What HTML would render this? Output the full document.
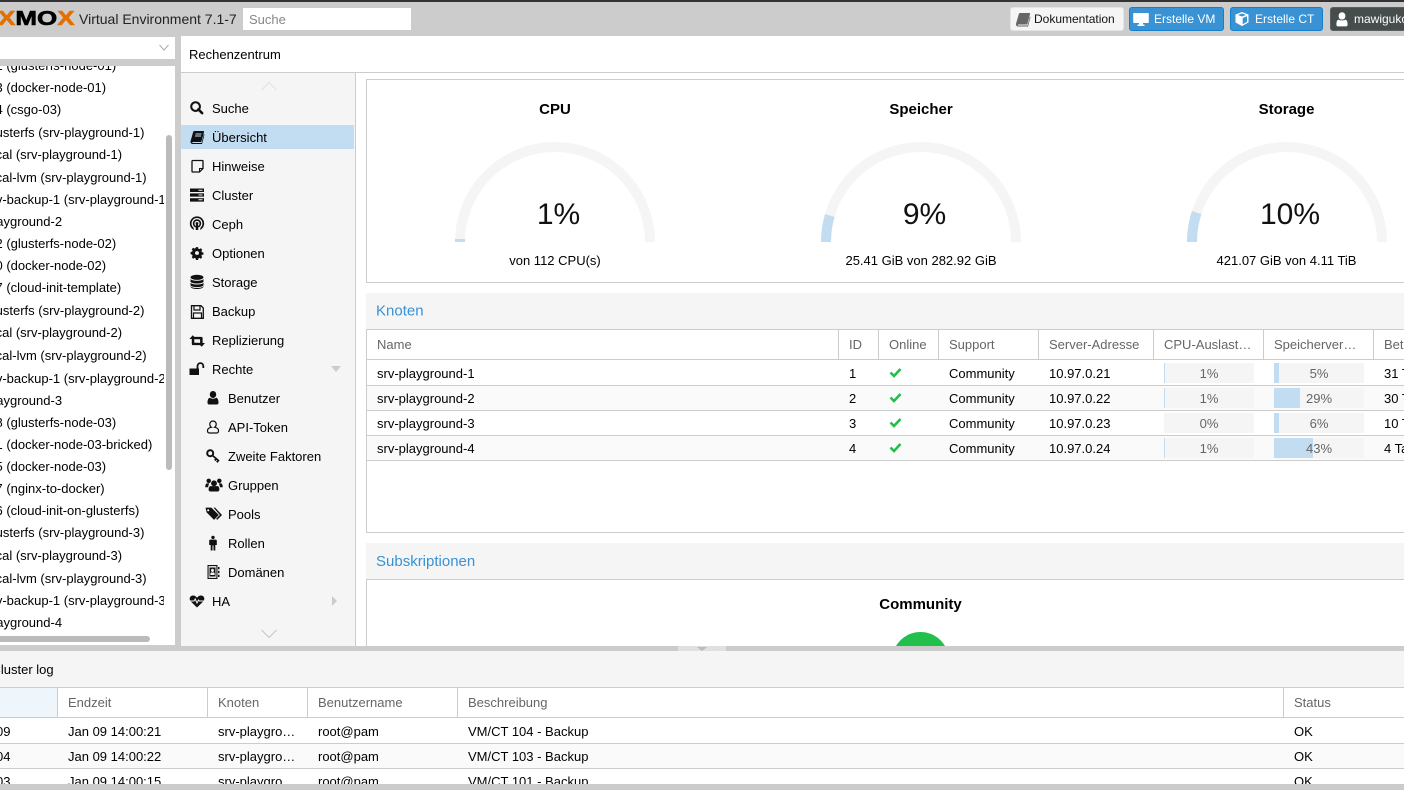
<!DOCTYPE html>
<html lang="de"><head><meta charset="utf-8"><title>Proxmox Virtual Environment</title>
<style>
html,body{margin:0;padding:0;overflow:hidden}
html{height:790px}
body{width:1404px;height:790px;overflow:hidden;position:relative;background:#ccc;font:13px/22px "Liberation Sans",sans-serif;color:#000}
div,svg{position:absolute}
.t{white-space:nowrap}
.b{background:#ccc}
.g{color:#666}
.m{left:212px}
.s{left:228px}
.ic{width:16px;height:16px;left:189px;fill:#111}
.ic.sub{left:205px}
.btn{top:7px;height:22px;border:1px solid #157fcc;border-radius:3px;background:#3892d4;color:#fff;font-size:12px;line-height:22px;box-sizing:content-box}
.c{text-align:center}
.bar{width:90px;height:20px;background:#f5f5f5;color:#666;text-align:center;line-height:22px;overflow:hidden}
.bar i{position:absolute;left:0;top:0;height:20px;background:#c2ddf2}
.bar span{position:relative}
</style></head><body>
<div style="left:0;top:0;width:1404px;height:2px;background:#333"></div>

<!-- logo + top -->
<div class="t" style="left:-2px;top:6px;font:bold 20px/26px 'Liberation Sans',sans-serif;-webkit-text-stroke:.6px currentColor;transform:scaleX(1.3);transform-origin:0 50%"><span style="color:#e57000">X</span><span style="color:#000">MO</span><span style="color:#e57000">X</span></div>
<div class="t" style="left:79px;top:8px;font-size:14px;color:#222">Virtual Environment 7.1-7</div>
<div class="t" style="left:243px;top:8px;height:22px;padding-left:6px;width:162px;background:#fff;color:#888;line-height:23px">Suche</div>

<div class="btn" style="left:1010px;width:112px;background:#f5f5f5;border-color:#e4e4e4;color:#111"><span style="position:absolute;left:23px" class="t">Dokumentation</span>
<svg style="left:4px;top:3px" width="16" height="16" viewBox="0 0 16 16"><path fill="#666" d="M5 2h9.500c.5 0 .7.500.5 1l-2.500 9.500c-.2.800-.7 1-1.300 1H3.500c-1 0-1 1 0 1h9l2.300-9 .7.500-2.400 9.500H3.300c-1.800 0-2.600-1.300-2.200-3L3.700 3.500C4 2.500 4.200 2 5 2z"/></svg></div>
<div class="btn" style="left:1129px;width:93px"><span style="position:absolute;left:24px" class="t">Erstelle VM</span>
<svg style="left:3px;top:3px" width="16" height="16" viewBox="0 0 16 16"><path fill="#fff" d="M1 2h14c.5 0 .8.300.8.800v8.400c0 .5-.3.800-.8.800H10v1.500h1.500V15h-7v-1.500H6V12H1c-.5 0-.8-.3-.8-.8V2.800C.2 2.300.5 2 1 2z"/></svg></div>
<div class="btn" style="left:1230px;width:91px"><span style="position:absolute;left:24px" class="t">Erstelle CT</span>
<svg style="left:3px;top:3px" width="16" height="16" viewBox="0 0 16 16"><path fill="#fff" d="M8 1l6.500 2.500v8L8 15l-6.500-3.500v-8zM8 2.500L4 4l4 1.500L12 4zM8.700 13.200l4.300-2.400V5.300L8.700 7z"/></svg></div>
<div class="btn" style="left:1330px;width:80px;background:#464d4d;border-color:#5a6060"><span style="position:absolute;left:23px" class="t">mawigukotest</span>
<svg style="left:2px;top:2px" width="18" height="18" viewBox="0 0 16 16"><path fill="#fff" d="M8 2a3 3 0 0 1 3 3.200C11 7 10 8.500 8 8.500S5 7 5 5.200A3 3 0 0 1 8 2zM5 8.500C6 9.500 10 9.500 11 8.500c1.500.3 2 2 2 4.500 0 1-.5 1.500-1.500 1.500h-7C3.500 14.500 3 14 3 13c0-2.500.5-4.200 2-4.500z"/></svg></div>

<!-- tree select -->
<div style="left:0;top:37px;width:175px;height:22px;background:#fff"></div>
<svg style="left:158px;top:43px" width="12" height="10" viewBox="0 0 12 10"><path d="M1.500 2l4.500 5 4.500-5" fill="none" stroke="#aaa"/></svg>

<!-- tree -->
<div class="tree" style="left:0;top:66px;width:175px;height:579px;background:#fff;overflow:hidden">
 <div style="left:0;top:1px;width:164px;height:578px;overflow:visible;clip-path:inset(-5px 0 0 0)">
 <div class="t" style="left:-4.500px;top:-12px">1 (glusterfs-node-01)</div>
 <div class="t" style="left:-4.500px;top:10px">3 (docker-node-01)</div>
 <div class="t" style="left:-4.500px;top:32px">4 (csgo-03)</div>
 <div class="t" style="left:-14.500px;top:55px">glusterfs (srv-playground-1)</div>
 <div class="t" style="left:-14.500px;top:77px">local (srv-playground-1)</div>
 <div class="t" style="left:-14.500px;top:100px">local-lvm (srv-playground-1)</div>
 <div class="t" style="left:-15px;top:122px">srv-backup-1 (srv-playground-1)</div>
 <div class="t" style="left:-35.500px;top:144px">srv-playground-2</div>
 <div class="t" style="left:-4.500px;top:166px">2 (glusterfs-node-02)</div>
 <div class="t" style="left:-4.500px;top:188px">0 (docker-node-02)</div>
 <div class="t" style="left:-4.500px;top:210px">7 (cloud-init-template)</div>
 <div class="t" style="left:-14.500px;top:233px">glusterfs (srv-playground-2)</div>
 <div class="t" style="left:-14.500px;top:255px">local (srv-playground-2)</div>
 <div class="t" style="left:-14.500px;top:278px">local-lvm (srv-playground-2)</div>
 <div class="t" style="left:-15px;top:301px">srv-backup-1 (srv-playground-2)</div>
 <div class="t" style="left:-35.500px;top:323px">srv-playground-3</div>
 <div class="t" style="left:-4.500px;top:345px">8 (glusterfs-node-03)</div>
 <div class="t" style="left:-4.500px;top:367px">1 (docker-node-03-bricked)</div>
 <div class="t" style="left:-4.500px;top:389px">5 (docker-node-03)</div>
 <div class="t" style="left:-4.500px;top:411px">7 (nginx-to-docker)</div>
 <div class="t" style="left:-4.500px;top:433px">6 (cloud-init-on-glusterfs)</div>
 <div class="t" style="left:-14.500px;top:455px">glusterfs (srv-playground-3)</div>
 <div class="t" style="left:-14.500px;top:478px">local (srv-playground-3)</div>
 <div class="t" style="left:-14.500px;top:501px">local-lvm (srv-playground-3)</div>
 <div class="t" style="left:-15px;top:523px">srv-backup-1 (srv-playground-3)</div>
 <div class="t" style="left:-35.500px;top:545px">srv-playground-4</div>
 </div>
 <div style="left:166px;top:69px;width:6px;height:335px;background:#bbb;border-radius:3px"></div>
 <div style="left:-10px;top:570px;width:160px;height:6px;background:#bbb;border-radius:3px"></div>
</div>

<!-- center header -->
<div style="left:181px;top:36px;width:1223px;height:36px;background:#fff"></div>
<div class="t" style="left:189px;top:44px">Rechenzentrum</div>

<!-- menu -->
<div style="left:181px;top:73px;width:174px;height:573px;background:#f5f5f5"></div>
<div style="left:355px;top:73px;width:1px;height:573px;background:#ccc"></div>
<div style="left:356px;top:73px;width:1048px;height:573px;background:#fff"></div>
<div style="left:181px;top:125px;width:173px;height:24px;background:#c2ddf2"></div>
<svg style="left:260px;top:80px" width="18" height="12" viewBox="0 0 18 12"><path d="M1.500 10L9 2.500 16.500 10" fill="none" stroke="#e2e2e2"/></svg>
<svg style="left:260px;top:628px" width="18" height="12" viewBox="0 0 18 12"><path d="M1.500 2L9 9.500 16.500 2" fill="none" stroke="#c4c4c4"/></svg>

<div class="t m" style="top:98px">Suche</div>
<div class="t m" style="top:127px">Übersicht</div>
<div class="t m" style="top:156px">Hinweise</div>
<div class="t m" style="top:185px">Cluster</div>
<div class="t m" style="top:214px">Ceph</div>
<div class="t m" style="top:243px">Optionen</div>
<div class="t m" style="top:272px">Storage</div>
<div class="t m" style="top:301px">Backup</div>
<div class="t m" style="top:330px">Replizierung</div>
<div class="t m" style="top:359px">Rechte</div>
<div class="t s" style="top:388px">Benutzer</div>
<div class="t s" style="top:417px">API-Token</div>
<div class="t s" style="top:446px">Zweite Faktoren</div>
<div class="t s" style="top:475px">Gruppen</div>
<div class="t s" style="top:504px">Pools</div>
<div class="t s" style="top:533px">Rollen</div>
<div class="t s" style="top:562px">Domänen</div>
<div class="t m" style="top:591px">HA</div>

<svg class="ic" style="top:100px;left:189px;width:15px;height:15px" viewBox="0 0 16 16"><circle cx="7" cy="7" r="4.600" fill="none" stroke="#111" stroke-width="2.200"/><path d="M10 10l4 4" stroke="#111" stroke-width="2.800" stroke-linecap="round"/></svg>
<svg class="ic" style="top:129px" viewBox="0 0 16 16"><path d="M5.500 2h8.800c.6 0 .9.400.7 1l-2.400 9c-.2.700-.6 1-1.200 1H4c-1 0-1 1 .1 1h8.400l2.400-9 .6.500L13 15H4c-2 0-2.800-1.300-2.400-3L4 3.500C4.300 2.500 4.700 2 5.500 2z"/><path d="M6.500 5h6M6 7h6" stroke="#c2ddf2" stroke-width=".9"/></svg>
<svg class="ic" style="top:158px" viewBox="0 0 16 16"><path d="M3.800 2.500h9.700a.5.500 0 0 1 .5.500v7.500L10.500 14H3.800a.8.800 0 0 1-.8-.8V3.300a.8.800 0 0 1 .8-.8z" fill="none" stroke="#111" stroke-width="1.300"/><path d="M13.500 10.500h-3v3" fill="none" stroke="#111"/></svg>
<svg class="ic" style="top:187px" viewBox="0 0 16 16"><path d="M1 1.500h14v3.500H1zM1 6.300h14v3.500H1zM1 11.100h14v3.500H1z"/><path d="M9.500 2.700h4v1h-4zM9.500 7.500h4v1h-4zM9.500 12.300h4v1h-4zM1 5h14v1.300H1zM1 9.800h14v1.300H1z" fill="#f5f5f5"/></svg>
<svg class="ic" style="top:216px" viewBox="0 0 16 16"><circle cx="8" cy="7.500" r="6.300" fill="none" stroke="#111" stroke-width="1.700"/><circle cx="8" cy="7.500" r="3.400" fill="none" stroke="#111" stroke-width="1.600"/><path d="M4.500 12l1 3.500h5l1-3.500z" fill="#f5f5f5"/><circle cx="8" cy="7.500" r="1.400"/><path d="M7.100 8.500h1.800l.4 5.500H6.700z"/></svg>
<svg class="ic" style="top:245px" viewBox="0 0 16 16"><g transform="translate(8 8) scale(.88) translate(-8 -7.700)"><path fill-rule="evenodd" d="M6.800 1h2.400l.4 1.800 1.100.5 1.600-1 1.700 1.700-1 1.600.5 1.100 1.800.4v2.400l-1.800.4-.5 1.100 1 1.600-1.700 1.700-1.600-1-1.100.5-.4 1.800H6.800l-.4-1.800-1.100-.5-1.600 1-1.700-1.700 1-1.600-.5-1.100L.7 8.900V6.500l1.800-.4.5-1.100-1-1.600 1.700-1.700 1.600 1 1.100-.5zM8 5.500a2.200 2.200 0 1 0 0 4.400 2.200 2.200 0 0 0 0-4.400z"/></g></svg>
<svg class="ic" style="top:274px;left:188.500px" viewBox="0 0 16 16"><ellipse cx="8" cy="3.300" rx="6.500" ry="2.600"/><path d="M1.500 5c1 2.300 12 2.300 13 0v2.600c-1 2.500-12 2.500-13 0zM1.500 8.800c1 2.300 12 2.300 13 0v2.400c-1 2.500-12 2.500-13 0zM1.500 12.300c1 2.300 12 2.300 13 0v.5c-1 3-12 3-13 0z"/></svg>
<svg class="ic" style="top:304px" viewBox="0 0 16 16"><path d="M2.500 1.700h9.500l2.300 2.300v10.300H2.500z" fill="none" stroke="#111" stroke-width="1.300"/><path d="M5 2v4h6V2M4.500 14V9h8v5" fill="none" stroke="#111" stroke-width="1.200"/></svg>
<svg class="ic" style="top:333px" viewBox="0 0 16 16"><path d="M3.700 2.200L7.400 6H5.300v3.800h5l2.100 2.300H4.200c-1 0-1.400-.4-1.400-1.400V6H.5z"/><path d="M12.700 13.800L9 10h2.100V6.200h-5L4 3.900h8.200c1 0 1.400.4 1.400 1.400V10H16z"/></svg>
<svg class="ic" style="top:361px" viewBox="0 0 16 16"><path d="M.5 7.500h9.500V14H.5z"/><path d="M8.500 8V5a2.900 2.900 0 0 1 5.800 0v2" fill="none" stroke="#111" stroke-width="1.800"/></svg>
<svg style="left:330px;top:366px" width="12" height="7" viewBox="0 0 12 7"><path d="M1 0h10L6 6z" fill="#ccc"/></svg>
<svg style="left:331px;top:595px" width="7" height="12" viewBox="0 0 7 12"><path d="M1 1l5 5-5 5z" fill="#ccc"/></svg>

<svg class="ic sub" style="top:390px" viewBox="0 0 16 16"><path d="M8 1a3.200 3.200 0 0 1 3.200 3.400C11.200 6.300 10 8 8 8S4.800 6.300 4.800 4.400A3.200 3.200 0 0 1 8 1zM4.800 7.800c1.200 1.200 5.200 1.200 6.400 0 1.500.3 2.300 2.200 2.300 4.900 0 1-.6 1.800-1.600 1.800H4.100c-1 0-1.600-.8-1.600-1.800 0-2.700.8-4.600 2.300-4.900z"/></svg>
<svg class="ic sub" style="top:419px" viewBox="0 0 16 16"><path d="M8 2a3.200 3.200 0 0 1 3.200 3.300c0 1.300-.6 2.400-1.500 3 2.200.3 3.800 1.500 3.800 3.500 0 1.400-.8 2.200-2 2.200h-7c-1.200 0-2-.8-2-2.200 0-2 1.600-3.200 3.800-3.500-.9-.6-1.500-1.700-1.500-3A3.200 3.200 0 0 1 8 2z" fill="none" stroke="#111" stroke-width="1.200"/></svg>
<svg class="ic sub" style="top:448px" viewBox="0 0 16 16"><circle cx="5.200" cy="5.200" r="3" fill="none" stroke="#111" stroke-width="2"/><path d="M7.500 7.500l6.500 5.500M11.300 10.700l-1.500 1.800M13.300 12.500l-1.500 1.800" stroke="#111" stroke-width="1.800" fill="none"/></svg>
<svg class="ic sub" style="top:476px;left:204.500px;width:18px;height:18px" viewBox="0 0 16 16"><circle cx="8" cy="6.500" r="2.600"/><circle cx="3.300" cy="4.300" r="2"/><circle cx="12.700" cy="4.300" r="2"/><path d="M5 9h6c1 0 1.800 1 1.800 3 0 1-.5 1.800-1.500 1.800H4.700c-1 0-1.500-.8-1.500-1.800 0-2 .8-3 1.800-3zM.2 10c0-2 .7-3.500 1.500-3.500h2C3.500 7.500 3 8 2.800 10zM15.800 10c0-2-.7-3.500-1.500-3.500h-2c.3 1 .8 1.500 1 3.500z"/></svg>
<svg class="ic sub" style="top:506px;left:204.500px;width:17px;height:17px" viewBox="0 0 16 16"><path d="M.5 1.500h5.500l7 7-4.500 4.500-7-7z"/><path d="M8 1.500h1.500l6.500 7-4.500 4.500-1-1 3.500-3.500z"/><circle cx="3" cy="4" r="1" fill="#f5f5f5"/></svg>
<svg class="ic sub" style="top:535px" viewBox="0 0 16 16"><circle cx="8" cy="2.400" r="1.700"/><path d="M5 4.600h6l.8.600V10H10.300v5.500H8.500v-5h-1v5H5.700V10H4.200V5.200z"/></svg>
<svg class="ic sub" style="top:564px" viewBox="0 0 16 16"><path fill-rule="evenodd" d="M2.500 1h10v14h-10zM3.600 2.100v11.800h7.800V2.100z"/><path d="M4.500 3.500h6v9h-6z"/><path d="M7.500 4.800a1.400 1.400 0 0 1 1.400 1.600c0 .9-.6 1.700-1.400 1.700s-1.400-.8-1.400-1.700a1.400 1.400 0 0 1 1.400-1.600zM5.300 11c0-1.600.4-2.400 1-2.700.6.500 1.800.5 2.400 0 .6.300 1 1.100 1 2.700z" fill="#f5f5f5"/><path d="M13 3h1.500v2.200H13zM13 6.900h1.500v2.200H13zM13 10.800h1.500V13H13z"/></svg>
<svg class="ic" style="top:593px" viewBox="0 0 16 16"><path d="M8 14.500L1.800 8.500C0 6.700.3 3 3.500 2.500 5.500 2.300 7 3.300 8 4.700 9 3.300 10.500 2.300 12.500 2.500 15.700 3 16 6.700 14.200 8.500z"/><path d="M.5 8h4.500l1.200-2 1.800 4 1.500-3 .8 1h5" fill="none" stroke="#f5f5f5" stroke-width="1"/></svg>

<!-- gauge panel -->
<div style="left:366px;top:79px;width:1100px;height:202px;border:1px solid #ccc"></div>
<div class="t c" style="left:455px;top:99px;width:200px;font-weight:bold;font-size:15px">CPU</div>
<div class="t c" style="left:821px;top:99px;width:200px;font-weight:bold;font-size:15px">Speicher</div>
<div class="t c" style="left:1186.500px;top:99px;width:200px;font-weight:bold;font-size:15px">Storage</div>
<svg style="left:455px;top:142px" width="200" height="100" viewBox="0 0 200 100"><path d="M5 100A95 95 0 0 1 195 100" fill="none" stroke="#f5f5f5" stroke-width="10"/><path d="M5 100A95 95 0 0 1 5.050 97" fill="none" stroke="#c2ddf2" stroke-width="10"/></svg>
<svg style="left:821px;top:142px" width="200" height="100" viewBox="0 0 200 100"><path d="M5 100A95 95 0 0 1 195 100" fill="none" stroke="#f5f5f5" stroke-width="10"/><path d="M5 100A95 95 0 0 1 8.800 73.500" fill="none" stroke="#c2ddf2" stroke-width="10"/></svg>
<svg style="left:1186.500px;top:142px" width="200" height="100" viewBox="0 0 200 100"><path d="M5 100A95 95 0 0 1 195 100" fill="none" stroke="#f5f5f5" stroke-width="10"/><path d="M5 100A95 95 0 0 1 9.650 70.600" fill="none" stroke="#c2ddf2" stroke-width="10"/></svg>
<div class="t c" style="left:458.500px;top:195px;width:200px;font-size:30px;line-height:40px;color:#111">1%</div>
<div class="t c" style="left:824.500px;top:195px;width:200px;font-size:30px;line-height:40px;color:#111">9%</div>
<div class="t c" style="left:1190px;top:195px;width:200px;font-size:30px;line-height:40px;color:#111">10%</div>
<div class="t c" style="left:455px;top:250px;width:200px">von 112 CPU(s)</div>
<div class="t c" style="left:821px;top:250px;width:200px">25.41 GiB von 282.92 GiB</div>
<div class="t c" style="left:1186.500px;top:250px;width:200px">421.07 GiB von 4.11 TiB</div>

<!-- Knoten -->
<div style="left:366px;top:293px;width:1038px;height:36px;background:#f5f5f5"></div>
<div class="t" style="left:376px;top:300px;font-size:15px;line-height:22px;color:#3892d4;transform:translateY(.5px)">Knoten</div>
<div style="left:366px;top:329px;width:1100px;height:202px;border:1px solid #ccc"></div>
<div class="b" style="left:367px;top:359px;width:1037px;height:1px"></div>
<div class="b" style="left:367px;top:385px;width:1037px;height:1px"></div>
<div class="b" style="left:367px;top:410px;width:1037px;height:1px"></div>
<div class="b" style="left:367px;top:435px;width:1037px;height:1px"></div>
<div class="b" style="left:367px;top:460px;width:1037px;height:1px"></div>
<div style="left:367px;top:386px;width:1037px;height:24px;background:#fafafa"></div>
<div style="left:367px;top:436px;width:1037px;height:24px;background:#fafafa"></div>
<div class="b" style="left:838px;top:330px;width:1px;height:29px"></div>
<div class="b" style="left:878px;top:330px;width:1px;height:29px"></div>
<div class="b" style="left:938px;top:330px;width:1px;height:29px"></div>
<div class="b" style="left:1038px;top:330px;width:1px;height:29px"></div>
<div class="b" style="left:1153px;top:330px;width:1px;height:29px"></div>
<div class="b" style="left:1263px;top:330px;width:1px;height:29px"></div>
<div class="b" style="left:1373px;top:330px;width:1px;height:29px"></div>
<div class="t g" style="left:377px;top:334px">Name</div>
<div class="t g" style="left:849px;top:334px">ID</div>
<div class="t g" style="left:889px;top:334px">Online</div>
<div class="t g" style="left:949px;top:334px">Support</div>
<div class="t g" style="left:1049px;top:334px">Server-Adresse</div>
<div class="t g" style="left:1164px;top:334px">CPU-Auslast…</div>
<div class="t g" style="left:1274px;top:334px">Speicherver…</div>
<div class="t g" style="left:1384px;top:334px">Betriebszeit</div>

<div class="t" style="left:377px;top:363px">srv-playground-1</div><div class="t" style="left:849px;top:363px">1</div><div class="t" style="left:949px;top:363px">Community</div><div class="t" style="left:1049px;top:363px">10.97.0.21</div><div class="t" style="left:1384px;top:363px">31 Tage</div>
<div class="t" style="left:377px;top:388px">srv-playground-2</div><div class="t" style="left:849px;top:388px">2</div><div class="t" style="left:949px;top:388px">Community</div><div class="t" style="left:1049px;top:388px">10.97.0.22</div><div class="t" style="left:1384px;top:388px">30 Tage</div>
<div class="t" style="left:377px;top:413px">srv-playground-3</div><div class="t" style="left:849px;top:413px">3</div><div class="t" style="left:949px;top:413px">Community</div><div class="t" style="left:1049px;top:413px">10.97.0.23</div><div class="t" style="left:1384px;top:413px">10 Tage</div>
<div class="t" style="left:377px;top:438px">srv-playground-4</div><div class="t" style="left:849px;top:438px">4</div><div class="t" style="left:949px;top:438px">Community</div><div class="t" style="left:1049px;top:438px">10.97.0.24</div><div class="t" style="left:1384px;top:438px">4 Tage</div>

<svg style="left:889px;top:367px" width="13" height="11" viewBox="0 0 13 11"><path d="M1.500 5.500l3.500 3.500 6.500-7" fill="none" stroke="#21bf4b" stroke-width="2.600"/></svg>
<svg style="left:889px;top:392px" width="13" height="11" viewBox="0 0 13 11"><path d="M1.500 5.500l3.500 3.500 6.500-7" fill="none" stroke="#21bf4b" stroke-width="2.600"/></svg>
<svg style="left:889px;top:417px" width="13" height="11" viewBox="0 0 13 11"><path d="M1.500 5.500l3.500 3.500 6.500-7" fill="none" stroke="#21bf4b" stroke-width="2.600"/></svg>
<svg style="left:889px;top:442px" width="13" height="11" viewBox="0 0 13 11"><path d="M1.500 5.500l3.500 3.500 6.500-7" fill="none" stroke="#21bf4b" stroke-width="2.600"/></svg>

<div class="bar" style="left:1164px;top:363px"><i style="width:1px"></i><span>1%</span></div>
<div class="bar" style="left:1164px;top:388px"><i style="width:1px"></i><span>1%</span></div>
<div class="bar" style="left:1164px;top:413px"><span>0%</span></div>
<div class="bar" style="left:1164px;top:438px"><i style="width:1px"></i><span>1%</span></div>
<div class="bar" style="left:1274px;top:363px"><i style="width:5px"></i><span>5%</span></div>
<div class="bar" style="left:1274px;top:388px"><i style="width:26px"></i><span>29%</span></div>
<div class="bar" style="left:1274px;top:413px"><i style="width:5px"></i><span>6%</span></div>
<div class="bar" style="left:1274px;top:438px"><i style="width:39px"></i><span>43%</span></div>

<!-- Subskriptionen -->
<div style="left:366px;top:543px;width:1038px;height:36px;background:#f5f5f5"></div>
<div class="t" style="left:376px;top:551px;font-size:15px;color:#3892d4">Subskriptionen</div>
<div class="b" style="left:366px;top:579px;width:1038px;height:1px"></div>
<div class="b" style="left:366px;top:579px;width:1px;height:67px"></div>
<div class="t c" style="left:820.500px;top:594px;width:200px;font-weight:bold;font-size:15px">Community</div>
<div style="left:892px;top:632px;width:57px;height:14px;overflow:hidden"><div style="left:0;top:0;width:57px;height:57px;border-radius:50%;background:#21bf4b"></div></div>

<!-- splitter and log -->
<div class="b" style="left:0;top:646px;width:1404px;height:5px"></div>
<div style="left:678px;top:646px;width:48px;height:5px;background:#e0e0e0"></div>
<svg style="left:696px;top:647px" width="12" height="5" viewBox="0 0 12 5"><path d="M1 0h10L6 4z" fill="#bbb"/></svg>
<div style="left:0;top:651px;width:1404px;height:139px;background:#fff"></div>
<div style="left:0;top:651px;width:1404px;height:36px;background:#f5f5f5"></div>
<div class="t" style="left:-8.500px;top:659px">Cluster log</div>
<div class="b" style="left:0;top:687px;width:1404px;height:1px"></div>
<div style="left:0;top:688px;width:57px;height:29px;background:#eef6fc"></div>
<div class="b" style="left:0;top:717px;width:1404px;height:1px"></div>
<div class="b" style="left:0;top:743px;width:1404px;height:1px"></div>
<div class="b" style="left:0;top:768px;width:1404px;height:1px"></div>
<div style="left:0;top:744px;width:1404px;height:24px;background:#fafafa"></div>
<div class="b" style="left:57px;top:688px;width:1px;height:29px"></div>
<div class="b" style="left:207px;top:688px;width:1px;height:29px"></div>
<div class="b" style="left:307px;top:688px;width:1px;height:29px"></div>
<div class="b" style="left:457px;top:688px;width:1px;height:29px"></div>
<div class="b" style="left:1283px;top:688px;width:1px;height:29px"></div>
<div class="t g" style="left:68px;top:692px">Endzeit</div>
<div class="t g" style="left:218px;top:692px">Knoten</div>
<div class="t g" style="left:318px;top:692px">Benutzername</div>
<div class="t g" style="left:468px;top:692px">Beschreibung</div>
<div class="t g" style="left:1294px;top:692px">Status</div>

<div class="t" style="left:-4px;top:721px">09</div><div class="t" style="left:68px;top:721px">Jan 09 14:00:21</div><div class="t" style="left:218px;top:721px">srv-playgro…</div><div class="t" style="left:318px;top:721px">root@pam</div><div class="t" style="left:468px;top:721px">VM/CT 104 - Backup</div><div class="t" style="left:1294px;top:721px">OK</div>
<div class="t" style="left:-4px;top:746px">04</div><div class="t" style="left:68px;top:746px">Jan 09 14:00:22</div><div class="t" style="left:218px;top:746px">srv-playgro…</div><div class="t" style="left:318px;top:746px">root@pam</div><div class="t" style="left:468px;top:746px">VM/CT 103 - Backup</div><div class="t" style="left:1294px;top:746px">OK</div>
<div class="t" style="left:-4px;top:771px">03</div><div class="t" style="left:68px;top:771px">Jan 09 14:00:15</div><div class="t" style="left:218px;top:771px">srv-playgro…</div><div class="t" style="left:318px;top:771px">root@pam</div><div class="t" style="left:468px;top:771px">VM/CT 101 - Backup</div><div class="t" style="left:1294px;top:771px">OK</div>
<div class="b" style="left:0;top:784px;width:1404px;height:6px"></div>
</body></html>
